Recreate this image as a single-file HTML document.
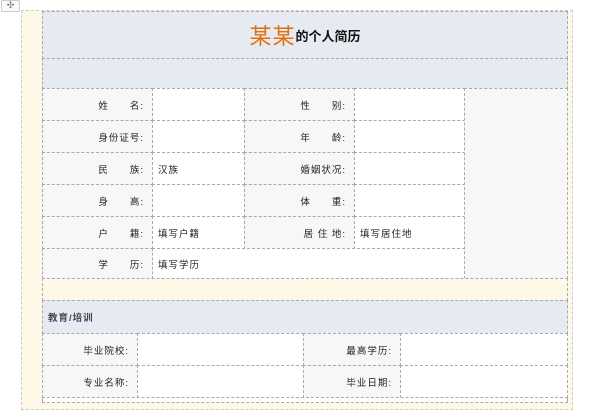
<!DOCTYPE html>
<html><head><meta charset="utf-8"><style>
body{margin:0;width:600px;height:400px;overflow:hidden;background:#fff;font-family:"Liberation Sans","Noto Sans CJK SC",sans-serif;position:relative}
.c{position:absolute;box-sizing:border-box;border:1px dashed #aaa;font-size:9.5px;color:#222;display:flex;align-items:center}
.l{background:#f7f7f7;justify-content:flex-end;padding-right:8px;letter-spacing:1px}
.v{background:#fff;padding-left:5px;letter-spacing:1px}
</style></head><body>
<div style="position:absolute;left:1px;top:0;width:17px;height:10px;border:1px solid #ccc;border-radius:2px;background:#fafafa;font-size:9px;line-height:9px;text-align:center;color:#777">✣</div>
<div style="position:absolute;left:21px;top:10px;width:552px;height:400px;background:#fdf8e8;border:1px dashed #ccc;box-sizing:border-box"></div>
<div class="c" style="left:42px;top:11px;width:526px;height:48px;background:#e6eaf1;justify-content:center"><span style="color:#e07010;font-size:22px;letter-spacing:1px">某某</span><b style="font-size:13px;color:#111">的个人简历</b></div>
<div class="c" style="left:42px;top:58px;width:526px;height:31px;background:#e6eaf1"></div>

<div class="c l" style="left:42px;top:88px;width:111px;height:33px">姓&emsp;&emsp;名:</div>
<div class="c v" style="left:152px;top:88px;width:93px;height:33px"></div>
<div class="c l" style="left:244px;top:88px;width:111px;height:33px">性&emsp;&emsp;别:</div>
<div class="c v" style="left:354px;top:88px;width:111px;height:33px"></div>

<div class="c l" style="left:42px;top:120px;width:111px;height:33px">身份证号:</div>
<div class="c v" style="left:152px;top:120px;width:93px;height:33px"></div>
<div class="c l" style="left:244px;top:120px;width:111px;height:33px">年&emsp;&emsp;龄:</div>
<div class="c v" style="left:354px;top:120px;width:111px;height:33px"></div>

<div class="c l" style="left:42px;top:152px;width:111px;height:33px">民&emsp;&emsp;族:</div>
<div class="c v" style="left:152px;top:152px;width:93px;height:33px">汉族</div>
<div class="c l" style="left:244px;top:152px;width:111px;height:33px">婚姻状况:</div>
<div class="c v" style="left:354px;top:152px;width:111px;height:33px"></div>

<div class="c l" style="left:42px;top:184px;width:111px;height:33px">身&emsp;&emsp;高:</div>
<div class="c v" style="left:152px;top:184px;width:93px;height:33px"></div>
<div class="c l" style="left:244px;top:184px;width:111px;height:33px">体&emsp;&emsp;重:</div>
<div class="c v" style="left:354px;top:184px;width:111px;height:33px"></div>

<div class="c l" style="left:42px;top:216px;width:111px;height:33px">户&emsp;&emsp;籍:</div>
<div class="c v" style="left:152px;top:216px;width:93px;height:33px">填写户籍</div>
<div class="c l" style="left:244px;top:216px;width:111px;height:33px">居 住 地:</div>
<div class="c v" style="left:354px;top:216px;width:111px;height:33px">填写居住地</div>

<div class="c l" style="left:42px;top:248px;width:111px;height:31px">学&emsp;&emsp;历:</div>
<div class="c v" style="left:152px;top:248px;width:313px;height:31px">填写学历</div>

<div class="c" style="left:464px;top:88px;width:104px;height:191px;background:#f7f7f7"></div>

<div class="c" style="left:42px;top:278px;width:526px;height:23px;background:#fdf8e8"></div>
<div class="c" style="left:42px;top:300px;width:526px;height:34px;background:#e6eaf1;padding-left:5px;font-weight:bold;color:#445;letter-spacing:1px">教育/培训</div>

<div class="c l" style="left:42px;top:333px;width:96px;height:33px">毕业院校:</div>
<div class="c v" style="left:137px;top:333px;width:167px;height:33px"></div>
<div class="c l" style="left:303px;top:333px;width:98px;height:33px">最高学历:</div>
<div class="c v" style="left:400px;top:333px;width:168px;height:33px"></div>

<div class="c l" style="left:42px;top:365px;width:96px;height:33px">专业名称:</div>
<div class="c v" style="left:137px;top:365px;width:167px;height:33px"></div>
<div class="c l" style="left:303px;top:365px;width:98px;height:33px">毕业日期:</div>
<div class="c v" style="left:400px;top:365px;width:168px;height:33px"></div>
<div class="c" style="left:42px;top:397px;width:526px;height:6px;background:#fff"></div>
</body></html>
